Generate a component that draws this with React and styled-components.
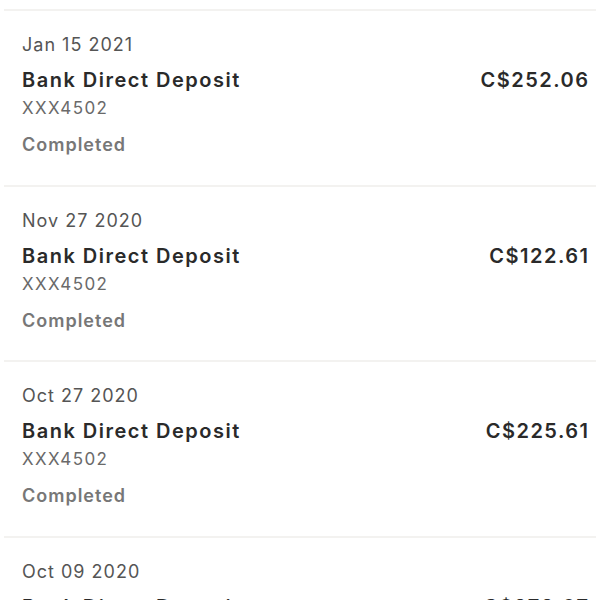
import React from "react";
import styled, { createGlobalStyle } from "styled-components";

const Global = createGlobalStyle`
  html, body { margin: 0; padding: 0; background: #ffffff; }
  body { width: 600px; height: 600px; overflow: hidden; font-family: "Inter", "Lato", sans-serif; }
`;

const List = styled.div`
  display: flex;
  flex-direction: column;
  padding-top: 9px;
`;

const Row = styled.div`
  margin: 0 4px;
  border-top: 2px solid #f3f2f0;
  height: 175.5px;
  flex-shrink: 0;
  box-sizing: border-box;
  padding: 22px 8px 0 18px;
  display: grid;
  grid-template-columns: 1fr auto;
  align-content: start;
  align-items: start;
`;

const DateText = styled.div`
  grid-column: 1 / 3;
  font-size: 18px;
  color: #555555;
  line-height: 24px;
  letter-spacing: 1px;
`;

const Title = styled.div`
  margin-top: 10px;
  font-size: 20px;
  font-weight: 600;
  color: #2a2a2a;
  line-height: 26px;
  letter-spacing: 1.5px;
`;

const Amount = styled(Title)`
  text-align: right;
  margin-right: -1.5px;
`;

const Account = styled.div`
  grid-column: 1 / 3;
  margin-top: 4px;
  font-size: 17px;
  color: #6a6a6a;
  line-height: 22px;
  letter-spacing: 1.4px;
`;

const Status = styled.div`
  grid-column: 1 / 3;
  margin-top: 14px;
  font-size: 18px;
  font-weight: 600;
  color: #777777;
  line-height: 24px;
  letter-spacing: 1px;
`;

const items = [
  { date: "Jan 15 2021", amount: "C$252.06" },
  { date: "Nov 27 2020", amount: "C$122.61" },
  { date: "Oct 27 2020", amount: "C$225.61" },
  { date: "Oct 09 2020", amount: "C$272.07" },
];

export default function App() {
  return (
    <>
      <Global />
      <List>
        {items.map((it) => (
          <Row key={it.date}>
            <DateText>{it.date}</DateText>
            <Title>Bank Direct Deposit</Title>
            <Amount>{it.amount}</Amount>
            <Account>XXX4502</Account>
            <Status>Completed</Status>
          </Row>
        ))}
      </List>
    </>
  );
}
